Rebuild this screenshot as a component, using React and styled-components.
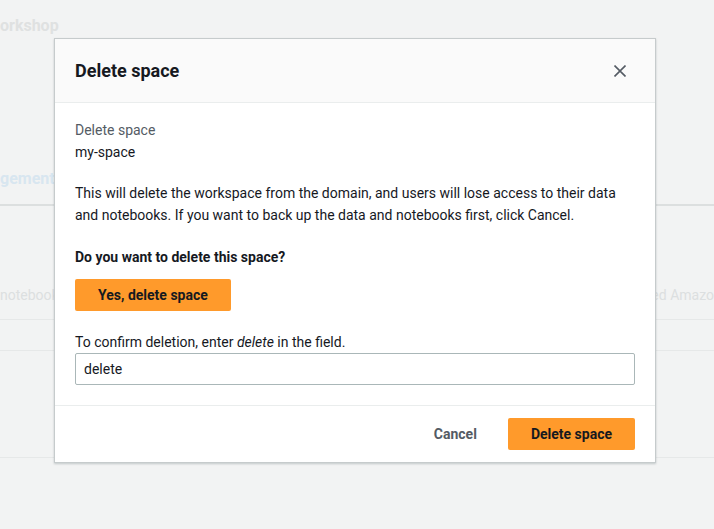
import React from "react";
import styled, { createGlobalStyle } from "styled-components";

const GlobalStyle = createGlobalStyle`
  html, body {
    margin: 0;
    padding: 0;
    background: #f2f3f3;
  }
  body {
    font-family: Roboto, "Liberation Sans", sans-serif;
    font-size: 14px;
    color: #16191f;
  }
`;

const Page = styled.div`
  position: relative;
  width: 714px;
  height: 529px;
  overflow: hidden;
  background: #f2f3f3;
`;

const PageTitle = styled.h1`
  margin: 0;
  padding: 16px 0 0;
  font-size: 16px;
  font-weight: 700;
  color: #dfe1e1;
  line-height: 20px;
`;

const TabBar = styled.div`
  display: flex;
  margin-top: 132px;
  height: 36px;
  border-bottom: 2px solid #dcdfdf;
`;

const Tab = styled.div`
  padding-top: 1px;
  font-size: 16px;
  font-weight: 700;
  line-height: 20px;
  color: #d8e6f0;
`;

const Row = styled.div`
  display: flex;
  justify-content: space-between;
  align-items: flex-start;
  height: ${(p) => p.h}px;
  border-bottom: 1px solid #e6e8e8;
  font-size: 14px;
  line-height: 20px;
  color: #dcdfe0;
`;

const Ghost = styled.span`
  padding-top: 79px;
`;

const Modal = styled.div`
  position: absolute;
  left: 54px;
  top: 38px;
  width: 600px;
  background: #fff;
  border: 1px solid #c6cbcc;
  box-shadow: 0 1px 2px rgba(0, 28, 36, 0.2);
`;

const Header = styled.div`
  display: flex;
  align-items: center;
  justify-content: space-between;
  height: 63px;
  padding: 0 20px;
  background: #fafafa;
  border-bottom: 1px solid #eaeded;
`;

const Title = styled.h2`
  margin: 0;
  font-size: 18px;
  font-weight: 700;
  color: #16191f;
  line-height: 22px;
`;

const Close = styled.button`
  display: flex;
  align-items: center;
  justify-content: center;
  width: 24px;
  height: 24px;
  padding: 0;
  margin-right: 3px;
  border: none;
  background: none;
  color: #545b64;
`;

const Body = styled.div`
  padding: 16px 20px 20px;
  line-height: 22px;
`;

const Label = styled.div`
  color: ${(p) => (p.muted ? "#545b64" : "#16191f")};
  font-weight: ${(p) => (p.bold ? 700 : 400)};
  margin-top: ${(p) => p.mt || 0}px;
`;

const Para = styled.p`
  margin: 19px 0 0;
  color: #16191f;
`;

const Button = styled.button`
  display: inline-flex;
  align-items: center;
  justify-content: center;
  height: 32px;
  padding: 0 23px;
  border: none;
  border-radius: 2px;
  font-family: inherit;
  font-size: 14px;
  font-weight: 700;
  color: ${(p) => (p.plain ? "#545b64" : "#16191f")};
  background: ${(p) => (p.plain ? "transparent" : "#ff9a2b")};
  margin-top: ${(p) => p.mt || 0}px;
`;

const Input = styled.div`
  box-sizing: border-box;
  height: 32px;
  padding: 4px 8px;
  border: 1px solid #aab7b8;
  border-radius: 2px;
  line-height: 22px;
  color: #16191f;
`;

const Footer = styled.div`
  display: flex;
  justify-content: flex-end;
  align-items: center;
  gap: 8px;
  padding: 12px 20px;
  border-top: 1px solid #eaeded;
`;

const App = () => (
  <Page>
    <GlobalStyle />
    <PageTitle>orkshop</PageTitle>
    <TabBar>
      <Tab>gement</Tab>
    </TabBar>
    <Row h={113}>
      <Ghost>notebooks</Ghost>
      <Ghost>red Amazo</Ghost>
    </Row>
    <Row h={30} />
    <Row h={106} />

    <Modal>
      <Header>
        <Title>Delete space</Title>
        <Close aria-label="Close">
          <svg width="12" height="12" viewBox="0 0 12 12">
            <path d="M0.5 0.5 L11.5 11.5 M11.5 0.5 L0.5 11.5" stroke="currentColor" strokeWidth="1.6" />
          </svg>
        </Close>
      </Header>
      <Body>
        <Label muted>Delete space</Label>
        <Label>my-space</Label>
        <Para>
          This will delete the workspace from the domain, and users will lose access to their data
          and notebooks. If you want to back up the data and notebooks first, click Cancel.
        </Para>
        <Label bold mt={20}>Do you want to delete this space?</Label>
        <Button mt={11}>Yes, delete space</Button>
        <Label mt={20}>
          To confirm deletion, enter <i>delete</i> in the field.
        </Label>
        <Input>delete</Input>
      </Body>
      <Footer>
        <Button plain>Cancel</Button>
        <Button>Delete space</Button>
      </Footer>
    </Modal>
  </Page>
);

export default App;
